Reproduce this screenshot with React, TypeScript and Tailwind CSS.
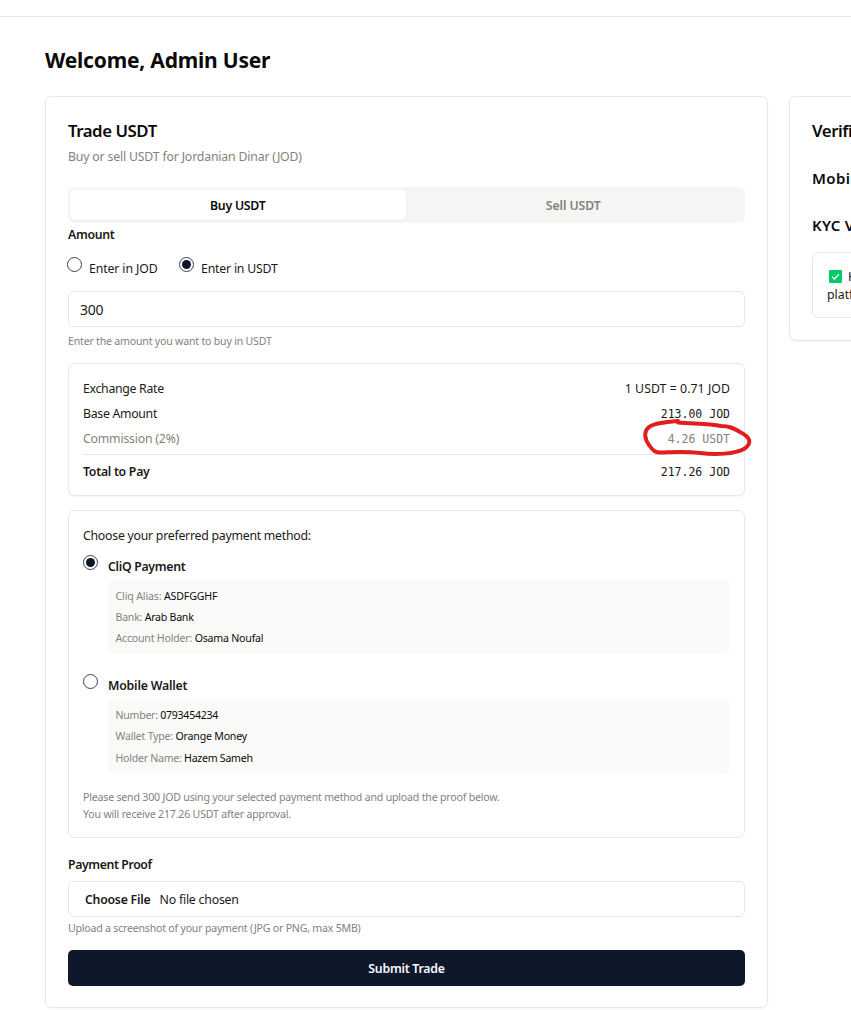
import type { ReactNode } from "react";

function Radio({ checked, className = "" }: { checked?: boolean; className?: string }) {
  return (
    <span
      role="radio"
      aria-checked={!!checked}
      className={`flex size-[15px] shrink-0 items-center justify-center rounded-full border border-[#3b4252] bg-white ${className}`}
    >
      {checked && <span className="size-[9px] rounded-full bg-[#0f172a]" />}
    </span>
  );
}

function Row({ label, children, className = "" }: { label: ReactNode; children: ReactNode; className?: string }) {
  return <div className={`flex h-[25px] items-center justify-between pt-[2px] ${className}`}>{label}{children}</div>;
}

function Detail({ label, value, className }: { label: string; value: string; className: string }) {
  return (
    <div className={`flex h-[21.2px] items-center whitespace-pre text-[10.6px] ${className}`}>
      <span className="text-[#86817c]">{label} </span>
      <span className="text-[#0c0a09]">{value}</span>
    </div>
  );
}

const mono = "font-['DejaVu_Sans_Mono',monospace] text-[11.5px]";

export default function App() {
  return (
    <div className="relative h-[1010px] w-[851px] overflow-hidden bg-white font-['Noto_Sans',sans-serif] text-[12.3px] whitespace-nowrap text-[#1c1917]">
      <header className="h-[17px] border-b border-[#e7e7e6]" />
      <main className="pl-[45px]">
        <h1 className="mt-[28px] flex h-[30px] items-center pt-[2px] text-[21px] font-bold text-[#0c0a09]"><span className="tracking-[-0.2px]">Welcome, Admin User</span></h1>
        <div className="mt-[21px] flex items-start gap-[21px]">
          <section className="h-[912px] w-[723px] shrink-0 rounded-[7px] border border-[#e7e7e6] px-[22px] pt-[24px] shadow-xs">
            <h2 className="flex h-[20px] items-center text-[16.8px] font-semibold text-[#0c0a09]"><span className="tracking-[-0.45px]">Trade USDT</span></h2>
            <p className="mt-[5px] flex h-[20px] items-center pt-[2px] text-[#86817c]"><span className="tracking-[-0.18px]">Buy or sell USDT for Jordanian Dinar (JOD)</span></p>
            <div className="mt-[21px] flex h-[36px] rounded-[6px] bg-[#f5f5f4] px-[2px] py-[2.5px] font-semibold">
              <button className="flex h-[30px] flex-1 items-center justify-center rounded-[5px] bg-white pt-[3px] text-[#0c0a09] shadow-xs"><span className="tracking-[-0.25px]">Buy USDT</span></button>
              <button className="flex h-[30px] flex-1 items-center justify-center pt-[3px] pr-[2px] text-[#86817c]"><span className="tracking-[-0.1px]">Sell USDT</span></button>
            </div>
            <div className="mt-[2px] flex h-[18px] items-center pt-[2px] font-semibold"><span className="tracking-[-0.3px]">Amount</span></div>
            <div className="mt-[14px] -ml-px flex h-[22px]">
              <Radio checked={false} />
              <span className="mt-[3px] ml-[7px] flex h-[18px] w-[90px] items-center"><span className="tracking-[-0.12px]">Enter in JOD</span></span>
              <Radio checked />
              <span className="mt-[3px] ml-[7px] flex h-[18px] items-center"><span className="tracking-[-0.2px]">Enter in USDT</span></span>
            </div>
            <div className="mt-[12px] flex h-[36px] items-center rounded-[6px] border border-[#e7e7e6] px-[11px] pt-px text-[14px]"><span className="tracking-[-0.2px]">300</span></div>
            <div className="mt-[6px] flex h-[16px] items-center pt-[2px] text-[10.6px] text-[#86817c]"><span className="tracking-[-0.21px]">Enter the amount you want to buy in USDT</span></div>

            <div className="mt-[14px] h-[133px] rounded-[7px] border border-[#e7e7e6] px-[14px] pt-[12px] shadow-xs">
              <Row label={<span className="tracking-[-0.3px]">Exchange Rate</span>}><span className="tracking-[0.05px]">1 USDT = 0.71 JOD</span></Row>
              <Row label={<span className="tracking-[-0.3px]">Base Amount</span>}><span className={mono}>213.00 JOD</span></Row>
              <Row className="text-[#86817c]" label={<span className="tracking-[-0.2px]">Commission (2%)</span>}><span className={mono}>4.26 USDT</span></Row>
              <div className="mt-[3px] border-t border-[#e7e7e6] pt-[4px]">
                <Row label={<span className="font-semibold tracking-[-0.28px]">Total to Pay</span>}><span className={mono}>217.26 JOD</span></Row>
              </div>
            </div>

            <div className="mt-[14px] h-[328px] rounded-[7px] border border-[#e7e7e6] px-[14px] pt-[14px]">
              <div className="flex h-[20px] items-center pt-[2px]"><span className="tracking-[-0.25px]">Choose your preferred payment method:</span></div>
              <div className="mt-[10px] flex">
                <Radio checked />
                <div className="ml-[10px] flex-1">
                  <div className="mt-[2px] flex h-[18px] items-center pt-[2px] font-semibold"><span className="tracking-[-0.3px]">CliQ Payment</span></div>
                  <div className="mt-[5px] h-[74px] rounded-[5px] bg-[#fafaf9] pt-[6px] pl-[7.5px]">
                    <Detail label="Cliq Alias:" value="ASDFGGHF" className="tracking-[-0.15px]" />
                    <Detail label="Bank:" value="Arab Bank" className="tracking-[-0.25px]" />
                    <Detail label="Account Holder:" value="Osama Noufal" className="tracking-[-0.21px]" />
                  </div>
                </div>
              </div>
              <div className="mt-[20px] flex">
                <Radio />
                <div className="ml-[10px] flex-1">
                  <div className="mt-[2px] flex h-[18px] items-center pt-[2px] font-semibold"><span className="tracking-[-0.2px]">Mobile Wallet</span></div>
                  <div className="mt-[5px] h-[74px] rounded-[5px] bg-[#fafaf9] pt-[6px] pl-[7.5px]">
                    <Detail label="Number:" value="0793454234" className="tracking-[-0.28px]" />
                    <Detail label="Wallet Type:" value="Orange Money" className="tracking-[-0.21px]" />
                    <Detail label="Holder Name:" value="Hazem Sameh" className="tracking-[-0.27px] pt-px" />
                  </div>
                </div>
              </div>
              <div className="mt-[16px] text-[10.6px] leading-[17px] text-[#86817c]">
                <p><span className="tracking-[-0.2px]">Please send 300 JOD using your selected payment method and upload the proof below.</span></p>
                <p><span className="tracking-[-0.2px]">You will receive 217.26 USDT after approval.</span></p>
              </div>
            </div>

            <div className="mt-[17px] flex h-[18px] items-center pt-[2px] font-semibold"><span className="tracking-[-0.4px]">Payment Proof</span></div>
            <div className="mt-[8px] flex h-[36px] items-center rounded-[6px] border border-[#e7e7e6] px-[16px] pt-[2px]">
              <span className="w-[74.5px] font-semibold"><span className="tracking-[-0.25px]">Choose File</span></span>
              <span className="pt-px"><span className="tracking-[-0.2px]">No file chosen</span></span>
            </div>
            <div className="mt-[3px] flex h-[16px] items-center pt-[2px] text-[10.6px] text-[#86817c]"><span className="tracking-[-0.22px]">Upload a screenshot of your payment (JPG or PNG, max 5MB)</span></div>
            <button className="mt-[14px] flex h-[36px] w-full items-center justify-center rounded-[5px] bg-[#0f172a] pt-[2px] font-semibold text-[#f8fafc]"><span className="tracking-[-0.25px]">Submit Trade</span></button>
          </section>

          <section className="h-[245px] w-[350px] shrink-0 rounded-[7px] border border-[#e7e7e6] px-[22px] pt-[24px] shadow-xs">
            <h2 className="flex h-[20px] items-center text-[16.8px] font-semibold text-[#0c0a09]"><span className="tracking-[-0.45px]">Verification</span></h2>
            <h3 className="mt-[27px] flex h-[20px] items-center text-[15px] font-semibold text-[#0c0a09]"><span className="tracking-[0.35px]">Mobile</span></h3>
            <h3 className="mt-[27px] flex h-[20px] items-center text-[15px] font-semibold text-[#0c0a09]"><span className="tracking-[0.2px]">KYC Verified</span></h3>
            <div className="mt-[17px] h-[66px] rounded-[7px] border border-[#e7e7e6] px-[14px] pt-[14px] leading-[18px]">
              <p className="flex h-[18px] items-center">
                <svg viewBox="0 0 13 13" className="ml-[2px] size-[13px]">
                  <rect width="13" height="13" rx="1" fill="#00cc6a" />
                  <path d="M3 6.6 5.4 9 10 4.3" fill="none" stroke="#fff" strokeWidth="1.3" />
                </svg>
                <span className="ml-[6px] pt-px">KYC</span>
              </p>
              <p className="pt-px">platform</p>
            </div>
          </section>
        </div>
      </main>
      <svg viewBox="0 0 120 50" className="pointer-events-none absolute top-[410px] left-[636px] h-[50px] w-[120px]">
        <path
          d="M42 11 C30 12 18 13 13 17 C7 22 9 30 13 35 C17 41 20 43 26 42.5 C38 42 50 41 64 43 C80 45 99 44 108 39 C117 33 114 27 104 22 C97 18 93 16 85 16 C72 13 57 14 42 12.5"
          fill="none"
          stroke="#e11d1d"
          strokeWidth="4"
          strokeLinecap="round"
          strokeLinejoin="round"
        />
      </svg>
    </div>
  );
}
